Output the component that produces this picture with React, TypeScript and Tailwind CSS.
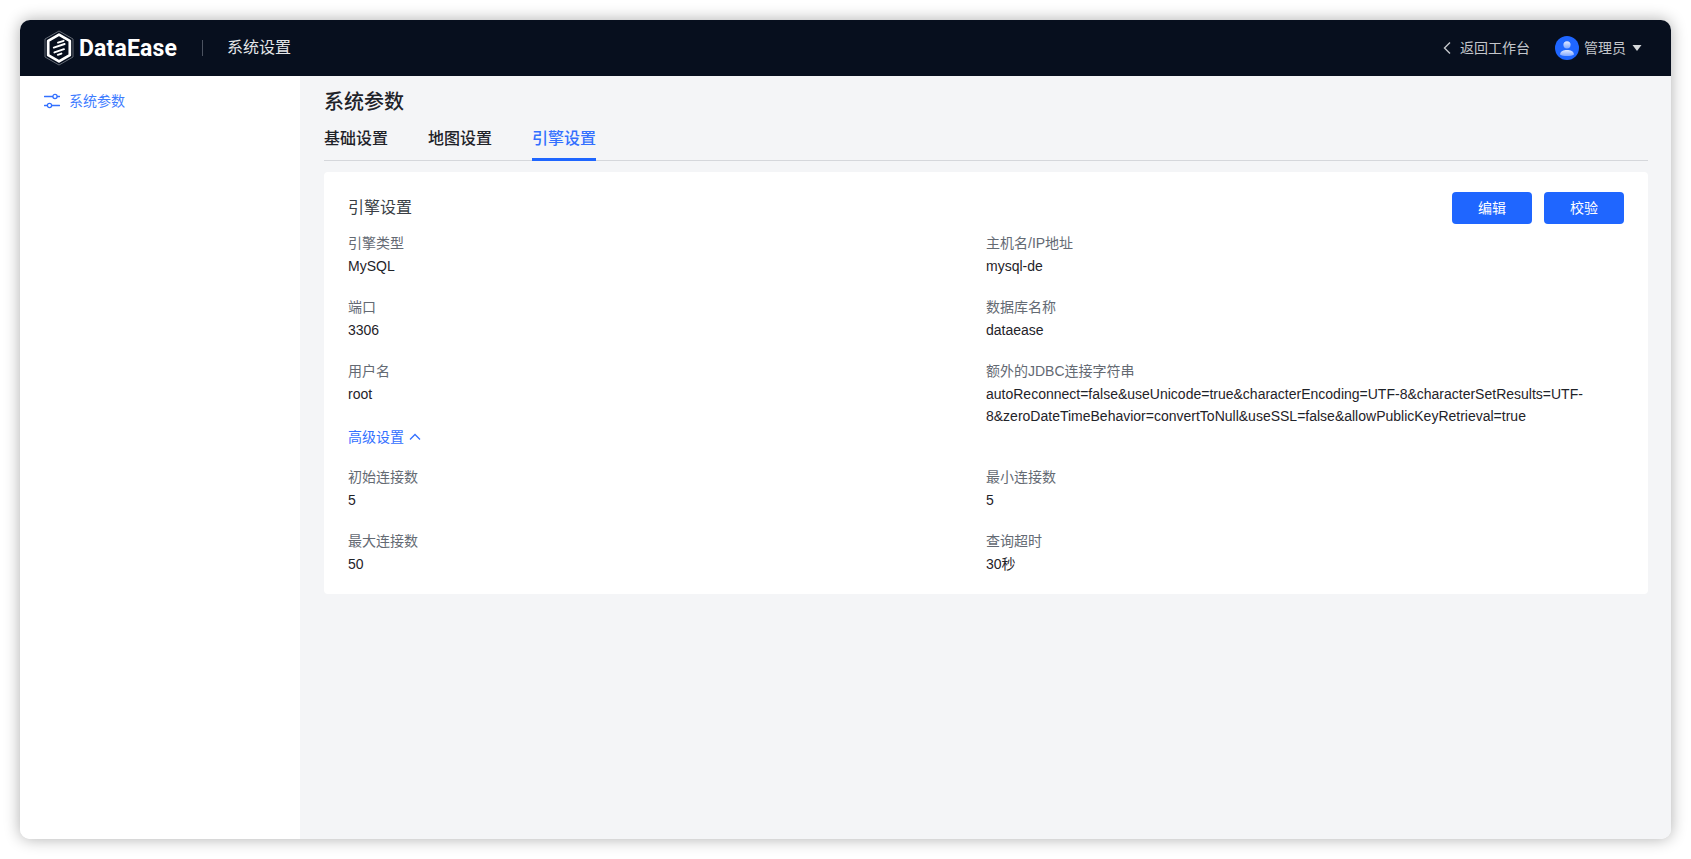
const sans = '"Liberation Sans","Noto Sans CJK SC",sans-serif';

function Logo() {
  return (
    <svg width="30" height="36" viewBox="0 0 30 36" fill="none" className="shrink-0">
      <path d="M15 1 L29 9 V27 L15 35 L1 27 V9 Z" stroke="#8b9199" strokeWidth="0.7" />
      <path d="M15 4.6 L25.8 10.8 V25.2 L15 31.4 L4.2 25.2 V10.8 Z" stroke="#fff" strokeWidth="2.7" strokeLinejoin="round" />
      <path d="M14 12.6 L19.6 10.8 M9.8 17.6 L20.6 14 M10.4 22.4 L20 19.2 M13.8 24.8 L17.4 23.6" stroke="#fff" strokeWidth="1.9" strokeLinecap="round" />
    </svg>
  );
}

function Avatar() {
  return (
    <svg width="24" height="24" viewBox="0 0 24 24" className="shrink-0">
      <defs>
        <linearGradient id="avg" x1="0" y1="0" x2="0" y2="1">
          <stop offset="0" stopColor="#e2eaff" />
          <stop offset="1" stopColor="#7ea6ff" />
        </linearGradient>
      </defs>
      <circle cx="12" cy="12" r="12" fill="#1f66ff" />
      <circle cx="12" cy="8.8" r="3.6" fill="url(#avg)" />
      <path d="M5 18.5 C5.5 15 8.5 14 12 14 C15.5 14 18.5 15 19 18.5 C17.5 19.6 15 20 12 20 C9 20 6.5 19.6 5 18.5 Z" fill="url(#avg)" />
    </svg>
  );
}

function Field({ label, children }: { label: string; children: React.ReactNode }) {
  return (
    <div className="pr-6 min-w-0">
      <div className="text-[14px] leading-[23px] text-[#646a73]">{label}</div>
      <div className="text-[14px] leading-[22px] text-[#1f2329] break-words">{children}</div>
    </div>
  );
}

export default function App() {
  return (
    <div className="h-[859px] w-[1691px] bg-white p-5" style={{ fontFamily: sans }}>
      <div className="h-[819px] flex flex-col rounded-[10px] overflow-hidden shadow-[0_0_16px_rgba(0,0,0,0.32)]">
        <header className="h-14 shrink-0 bg-[#070f1e] flex items-center pl-6 pr-[29px]">
          <Logo />
          <span className="ml-[5px] w-[100px] text-[23px] leading-none font-bold text-white tracking-[0.15px]" style={{ fontFamily: 'Roboto,"Liberation Sans",sans-serif' }}>DataEase</span>
          <div className="ml-[23px] h-4 w-px bg-[#4b5260]" />
          <span className="ml-6 text-[16px] text-[#e4e6e9]">系统设置</span>
          <div className="ml-auto flex items-center text-[14px] text-[#c3c6cb]">
            <svg width="10" height="14" viewBox="0 0 10 14" fill="none" className="mr-[8px]">
              <path d="M8 1.5 L2.5 7 L8 12.5" stroke="#c3c6cb" strokeWidth="1.4" />
            </svg>
            <span>返回工作台</span>
            <div className="ml-[25px]"><Avatar /></div>
            <span className="ml-[5px]">管理员</span>
            <svg width="10" height="6" viewBox="0 0 10 6" className="ml-[6px]">
              <path d="M0.5 0 H9.5 L5 6 Z" fill="#d5d7da" />
            </svg>
          </div>
        </header>
        <div className="flex-1 flex min-h-0">
          <aside className="w-[280px] shrink-0 bg-white pl-6 pt-[14px]">
            <div className="flex items-center h-[22px] text-[14px] text-[#3f7dff]">
              <svg width="16" height="16" viewBox="0 0 16 16" fill="none" className="mr-[9px]">
                <path d="M0.5 3.5 H8.5 M13.5 3.5 H15.5 M0.5 12.5 H3 M8 12.5 H15.5" stroke="#3370ff" strokeWidth="1.3" strokeLinecap="round" />
                <circle cx="11" cy="3.5" r="2.1" stroke="#3370ff" strokeWidth="1.3" />
                <circle cx="5.5" cy="12.5" r="2.1" stroke="#3370ff" strokeWidth="1.3" />
              </svg>
              系统参数
            </div>
          </aside>
          <main className="flex-1 min-w-0 bg-[#f4f5f7] pl-6 pr-[23px] pt-3">
            <h1 className="text-[20px] leading-7 font-medium text-[#1f2329]">系统参数</h1>
            <div className="mt-[11px] flex gap-10 border-b border-[#d5d7db] h-[34px]">
              <div className="text-[16px] leading-[24px] font-medium text-[#1f2329]">基础设置</div>
              <div className="text-[16px] leading-[24px] font-medium text-[#1f2329]">地图设置</div>
              <div className="text-[16px] leading-[24px] font-medium text-[#3370ff] h-[34px] border-b-[3px] border-[#1f66ff]">引擎设置</div>
            </div>
            <section className="mt-[11px] bg-white rounded px-6 pt-5 pb-[19px]">
              <div className="flex items-center justify-between h-8 mb-2">
                <h2 className="text-[16px] text-[#3a3f46]">引擎设置</h2>
                <div className="flex gap-3">
                  <button className="w-20 h-8 rounded bg-[#1f66ff] text-white text-[14px]">编辑</button>
                  <button className="w-20 h-8 rounded bg-[#1f66ff] text-white text-[14px]">校验</button>
                </div>
              </div>
              <div className="grid grid-cols-2 gap-y-[19px]">
                <Field label="引擎类型">MySQL</Field>
                <Field label="主机名/IP地址">mysql-de</Field>
                <Field label="端口">3306</Field>
                <Field label="数据库名称">dataease</Field>
                <Field label="用户名">root</Field>
                <Field label="额外的JDBC连接字符串">autoReconnect=false&amp;useUnicode=true&amp;characterEncoding=UTF-8&amp;characterSetResults=UTF-8&amp;zeroDateTimeBehavior=convertToNull&amp;useSSL=false&amp;allowPublicKeyRetrieval=true</Field>
              </div>
              <div className="-mt-px mb-[18px] h-[22px] flex items-center gap-[5px] text-[14px] text-[#3370ff]">
                高级设置
                <svg width="12" height="8" viewBox="0 0 12 8" fill="none">
                  <path d="M1 6.5 L6 1.5 L11 6.5" stroke="#3370ff" strokeWidth="1.3" />
                </svg>
              </div>
              <div className="grid grid-cols-2 gap-y-[19px]">
                <Field label="初始连接数">5</Field>
                <Field label="最小连接数">5</Field>
                <Field label="最大连接数">50</Field>
                <Field label="查询超时">30秒</Field>
              </div>
            </section>
          </main>
        </div>
      </div>
    </div>
  );
}
